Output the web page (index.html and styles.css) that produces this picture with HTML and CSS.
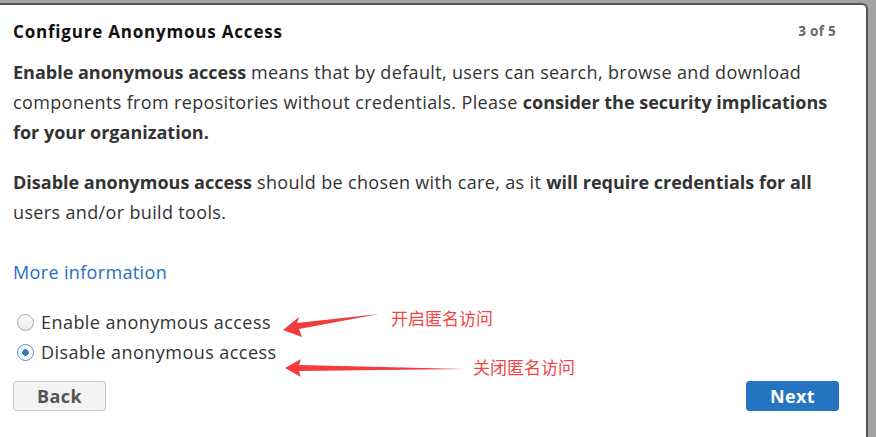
FILE: index.html
```html
<!DOCTYPE html>
<html lang="en">

<head>
  <meta charset="UTF-8" />
  <title>Configure Anonymous Access</title>
  <link rel="stylesheet" href="styles.css">
</head>

<body>
  <div class="modal">
    <div class="modal-header">
      <h2>Configure Anonymous Access</h2>
      <span class="step">3 of 5</span>
    </div>

    <div class="modal-body">
      <p><b>Enable anonymous access</b> means that by default, users can search, browse and download<br>
        components from repositories without credentials. Please <b>consider the security implications<br>
        for your organization.</b></p>

      <p><b>Disable anonymous access</b> should be chosen with care, as it <b>will require credentials for all</b><br>
        users and/or build tools.</p>

      <a class="more" href="#">More information</a>

      <div class="options">
        <label class="radio"><span class="dot"></span>Enable anonymous access</label>
        <label class="radio"><span class="dot checked"></span>Disable anonymous access</label>
      </div>
    </div>

    <div class="modal-footer">
      <button class="btn">Back</button>
      <button class="btn primary">Next</button>
    </div>

    <!-- annotations -->
    <svg class="arrow arrow-1" width="100" height="30" viewBox="0 0 100 30">
      <path d="M1 21 L17 8 L15 14 L97 5 L17 20 L20 28 Z" fill="#f03c3c" />
    </svg>
    <span class="note note-1">开启匿名访问</span>
    <svg class="arrow arrow-2" width="184" height="22" viewBox="0 0 184 22">
      <path d="M1 11 L17 2 L15 8 L181 12 L15 14 L17 20 Z" fill="#f03c3c" />
    </svg>
    <span class="note note-2">关闭匿名访问</span>
  </div>
</body>

</html>
```

FILE: styles.css
```css
* {
  box-sizing: border-box;
  margin: 0;
  padding: 0;
}

body {
  width: 100%;
  height: 100vh;
  background: #a3a3a3;
  font-family: "Open Sans", "Liberation Sans", sans-serif;
  color: #333;
  overflow: hidden;
}

.modal {
  position: relative;
  margin-top: 3px;
  width: 868px;
  height: 434px;
  background: white;
  border-top: 2px solid #555;
  border-right: 2px solid #555;
  border-radius: 0 6px 0 0;
}

.modal-header {
  display: flex;
  justify-content: space-between;
  align-items: center;
  height: 52px;
  padding: 0 30px 0 13px;
}

.modal-header h2 {
  font-size: 17px;
  font-weight: 700;
  letter-spacing: 0.8px;
  color: #111;
}

.step {
  font-size: 13.5px;
  font-weight: 700;
  letter-spacing: 0.3px;
  color: #666;
}

.modal-body {
  padding: 0 13px;
  font-size: 18px;
  letter-spacing: 0.35px;
  line-height: 30px;
}

.modal-body p {
  margin-bottom: 20px;
  white-space: nowrap;
}

.modal-body b {
  font-weight: 700;
  letter-spacing: 0;
}

.more {
  display: block;
  margin-top: 30px;
  color: #1f6fc4;
  text-decoration: none;
}

.options {
  margin-top: 20px;
}

.radio {
  display: flex;
  align-items: center;
  height: 30px;
  letter-spacing: 0.45px;
}

.dot {
  width: 17px;
  height: 17px;
  margin: 0 7px 0 4px;
  border-radius: 50%;
  border: 1px solid #aaa;
  background: linear-gradient(#fff, #e8e8e8);
}

.dot.checked {
  border-color: #4a90d9;
  background: radial-gradient(circle, #2d79c7 0 3px, #fff 3.5px);
}

.modal-footer {
  display: flex;
  justify-content: space-between;
  padding: 14px 27px 0 13px;
}

.btn {
  width: 93px;
  height: 30px;
  border: 1px solid #c8c8c8;
  border-radius: 3px;
  background: #f3f3f3;
  color: #555;
  font-family: inherit;
  font-size: 18px;
  font-weight: 700;
  letter-spacing: 0.4px;
}

.btn.primary {
  border-color: #2474c2;
  background: #2474c2;
  color: white;
}

.arrow {
  position: absolute;
}

.arrow-1 {
  left: 282px;
  top: 304px;
}

.arrow-2 {
  left: 284px;
  top: 352px;
}

.note {
  position: absolute;
  font-family: "Noto Sans CJK SC", sans-serif;
  font-size: 17px;
  color: #f04545;
}

.note-1 {
  left: 391px;
  top: 300px;
}

.note-2 {
  left: 473px;
  top: 349px;
}
```
